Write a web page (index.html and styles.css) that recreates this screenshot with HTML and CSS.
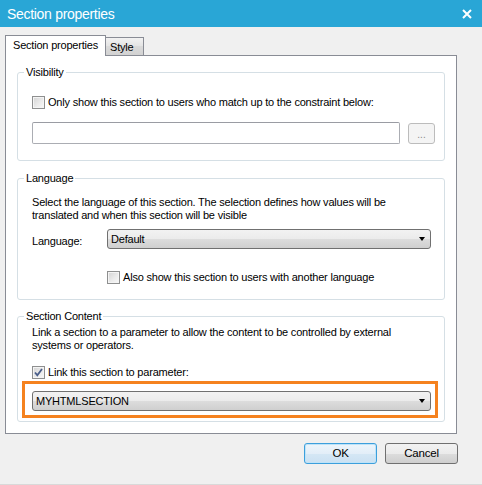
FILE: index.html
```html
<!DOCTYPE html>
<html>
<head>
<meta charset="utf-8">
<title>Section properties</title>
<link rel="stylesheet" href="styles.css">
</head>
<body>
<div class="window">
  <div class="titlebar">
    <span class="title">Section properties</span>
    <svg class="close" width="10" height="10" viewBox="0 0 10 10"><path d="M1 1L9 9M9 1L1 9" stroke="#fff" stroke-width="2" fill="none"/></svg>
  </div>
  <div class="main">
    <div class="tabs">
      <div class="tab active">Section properties</div>
      <div class="tab style">Style</div>
    </div>
    <div class="panel">
      <fieldset class="group g-vis">
        <legend>Visibility</legend>
        <div class="check-row"><span class="cb"></span><span>Only show this section to users who match up to the constraint below:</span></div>
        <div class="constraint-row"><div class="textbox"></div><div class="dots-btn">...</div></div>
      </fieldset>
      <fieldset class="group g-lang">
        <legend>Language</legend>
        <p class="desc">Select the language of this section. The selection defines how values will be<br>translated and when this section will be visible</p>
        <div class="lang-row"><span class="lang-label">Language:</span><div class="combo combo-lang"><span>Default</span><span class="arrow"></span></div></div>
        <div class="check-row indent"><span class="cb"></span><span>Also show this section to users with another language</span></div>
      </fieldset>
      <fieldset class="group g-content">
        <legend>Section Content</legend>
        <p class="desc">Link a section to a parameter to allow the content to be controlled by external<br>systems or operators.</p>
        <div class="check-row"><span class="cb checked"><svg width="11" height="11" viewBox="0 0 11 11"><path d="M2 5.5L4.3 8.2L9 2" stroke="#4a5e8a" stroke-width="1.8" fill="none"/></svg></span><span>Link this section to parameter:</span></div>
        <div class="highlight"><div class="combo combo-param"><span>MYHTMLSECTION</span><span class="arrow"></span></div></div>
      </fieldset>
    </div>
    <div class="buttons">
      <div class="btn ok">OK</div>
      <div class="btn">Cancel</div>
    </div>
  </div>
</div>
</body>
</html>
```

FILE: styles.css
```css
* { box-sizing: border-box; }
html, body { margin: 0; padding: 0; }
body {
  width: 482px;
  height: 485px;
  background: #f0f0f0;
  font-family: "Liberation Sans", Arial, sans-serif;
  font-size: 11px;
  letter-spacing: -0.2px;
  color: #000;
  overflow: hidden;
}
.window {
  height: 485px;
  border-bottom: 1px solid #d9d9d9;
}
.titlebar {
  height: 27px;
  background: #29a6d6;
  color: #fff;
  display: flex;
  align-items: center;
  justify-content: space-between;
  padding: 1px 10px 0 7px;
}
.title {
  font-size: 14px;
  letter-spacing: -0.3px;
  line-height: 16px;
}
.close { display: block; }
.main {
  padding: 8px 0 0 5px;
}
.tabs {
  display: flex;
  align-items: flex-end;
  height: 20px;
  position: relative;
  z-index: 1;
}
.tab {
  border: 1px solid #898c95;
  border-bottom: none;
  line-height: 13px;
  white-space: nowrap;
}
.tab.active {
  width: 101px;
  height: 21px;
  margin-bottom: -1px;
  background: #fff;
  padding: 3px 0 0 7px;
}
.tab.style {
  width: 39px;
  height: 18px;
  margin-left: -1px;
  background: linear-gradient(#f2f2f2, #e3e3e3 50%, #dadada 50%, #d2d2d2);
  padding: 3px 0 0 4px;
}
.panel {
  width: 452px;
  height: 379px;
  background: #fff;
  border: 1px solid #898c95;
}
.group {
  margin: 0 11px;
  padding: 0 9px 0 14px;
  border: 1px solid #d5dfe5;
  border-radius: 3px;
  min-width: 0;
}
.group legend {
  padding: 0 2px;
  margin-left: -8px;
  line-height: 14px;
  height: 14px;
}
.g-vis { margin-top: 9px; padding-bottom: 16px; }
.g-lang { margin-top: 10px; padding-bottom: 15px; }
.g-content { margin-top: 9px; padding-bottom: 3px; }

.check-row {
  display: flex;
  align-items: center;
  gap: 3px;
  height: 13px;
  line-height: 13px;
  white-space: nowrap;
}
.g-vis .check-row { margin-top: 17px; }
.g-lang .check-row { margin-top: 22px; }
.g-content .check-row { margin-top: 14px; }
.check-row.indent { margin-left: 75px; }

.cb {
  width: 13px;
  height: 13px;
  flex: none;
  border: 1px solid #8e8f8f;
  background: linear-gradient(135deg, #d3d3d3, #ececec 60%, #f8f8f8);
  box-shadow: inset 0 0 0 1px #f4f4f4;
  display: flex;
  align-items: center;
  justify-content: center;
}
.cb svg { display: block; }

.constraint-row {
  display: flex;
  gap: 8px;
  margin-top: 13px;
  height: 22px;
}
.textbox {
  width: 368px;
  height: 22px;
  border: 1px solid #abadb3;
  border-top-color: #9a9ca3;
  border-radius: 2px;
  background: #fff;
}
.dots-btn {
  width: 27px;
  height: 21px;
  margin-top: 1px;
  border: 1px solid #bcbcbc;
  border-radius: 3px;
  background: #f4f4f4;
  color: #8a8a8a;
  font-size: 10px;
  text-align: center;
  line-height: 22px;
  letter-spacing: 0;
}

.desc {
  margin: 0;
  line-height: 13px;
  white-space: nowrap;
}
.g-lang .desc { margin-top: 11px; }
.g-content .desc { margin-top: 3px; }

.lang-row {
  display: flex;
  align-items: center;
  margin-top: 7px;
  height: 20px;
}
.lang-label {
  width: 75px;
  padding-top: 3px;
}
.combo {
  height: 20px;
  border: 1px solid #707070;
  border-radius: 3px;
  background: linear-gradient(#f2f2f2, #ebebeb 50%, #dddddd 50%, #cfcfcf);
  display: flex;
  align-items: center;
  justify-content: space-between;
  padding: 0 5px 0 3px;
  line-height: 13px;
}
.combo-lang { width: 324px; }
.combo-param { width: 399px; }
.arrow {
  width: 0;
  height: 0;
  border-left: 3.5px solid transparent;
  border-right: 3.5px solid transparent;
  border-top: 4px solid #000;
}
.highlight {
  width: 416px;
  margin: 2px 0 0 -10px;
  border: 3px solid #f5821f;
  padding: 7px 0 4px 7px;
}

.buttons {
  display: flex;
  justify-content: flex-end;
  gap: 8px;
  padding-right: 24px;
  margin-top: 9px;
}
.btn {
  width: 73px;
  height: 21px;
  border: 1px solid #707070;
  border-radius: 3px;
  background: linear-gradient(#f2f2f2, #ebebeb 50%, #dddddd 50%, #cfcfcf);
  text-align: center;
  line-height: 19px;
  font-size: 11.5px;
}
.btn.ok {
  border-color: #3c9fdc;
  background: linear-gradient(#edf5fb, #e3eef8 50%, #d5e7f5 50%, #cbe1f2);
  box-shadow: inset 0 0 0 1px #bfe3f8;
}
```
